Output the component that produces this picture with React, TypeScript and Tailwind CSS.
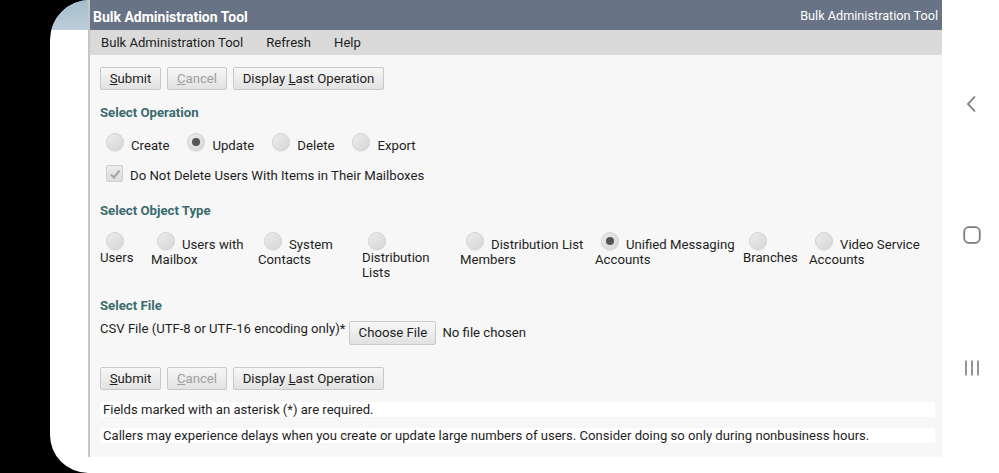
import React from 'react';

const font = { fontFamily: 'Roboto, "Noto Sans", sans-serif' };

function Btn({ children, disabled, className = '' }: { children: React.ReactNode; disabled?: boolean; className?: string }) {
  return (
    <span
      className={`inline-flex shrink-0 items-center justify-center whitespace-nowrap rounded-[2px] border border-[#c9c9c9] bg-gradient-to-b from-[#f7f7f7] to-[#e2e2e2] text-[13.2px] leading-[16px] ${disabled ? 'text-[#a0a0a0]' : 'text-[#1e1e1e]'} ${className}`}
    >
      {children}
    </span>
  );
}

function Radio({ on }: { on?: boolean }) {
  return (
    <span className="inline-grid h-[18px] w-[18px] shrink-0 place-items-center rounded-full border border-[#d3d3d3] bg-gradient-to-br from-[#ececec] to-[#d6d6d6] shadow-[0_1px_1px_rgba(0,0,0,0.08)]">
      {on && <span className="h-[8px] w-[8px] rounded-full bg-[#555]" />}
    </span>
  );
}

const objects = [
  { w: 51, first: '', rest: ['Users'], on: false },
  { w: 107, first: 'Users with', rest: ['Mailbox'], on: false },
  { w: 104, first: 'System', rest: ['Contacts'], on: false },
  { w: 98, first: '', rest: ['Distribution', 'Lists'], on: false },
  { w: 135, first: 'Distribution List', rest: ['Members'], on: false },
  { w: 148, first: 'Unified Messaging', rest: ['Accounts'], on: true },
  { w: 66, first: '', rest: ['Branches'], on: false },
  { w: 125, first: 'Video Service', rest: ['Accounts'], on: false },
];

function ButtonRow() {
  return (
    <div className="flex h-[23px] gap-[6px]">
      <Btn className="w-[61px]"><span><span className="underline">S</span>ubmit</span></Btn>
      <Btn disabled className="w-[60px]"><span><span className="underline">C</span>ancel</span></Btn>
      <Btn className="w-[151px]"><span>Display <span className="underline">L</span>ast Operation</span></Btn>
    </div>
  );
}

export default function App() {
  return (
    <div className="flex h-[473px] w-[999px] overflow-hidden bg-black text-[#1e1e1e]" style={font}>
      <div className="w-[50px] shrink-0" />
      <div className="flex flex-1 overflow-hidden rounded-tl-[40px] rounded-bl-[38px] bg-white">
        {/* left strip */}
        <div className="flex w-[38px] shrink-0 flex-col">
          <div className="h-[30px] bg-gradient-to-b from-[#a4bccb] to-[#bccfd9]" />
        </div>

        {/* main column */}
        <div className="flex h-[457px] w-[854px] shrink-0 flex-col border-l-2 border-[#c6c6c6] bg-[#f7f7f7]">
          <div className="flex h-[30px] shrink-0 items-center justify-between bg-[#687385] pl-[3px] pr-[4px] text-white">
            <span className="mt-[3px] text-[14px] font-bold leading-[16px]">Bulk Administration Tool</span>
            <span className="mt-[1px] text-[12.7px] leading-[16px]">Bulk Administration Tool</span>
          </div>
          <div className="flex h-[25px] shrink-0 items-center gap-[23px] bg-[#dadada] pl-[11px] pt-[1px] text-[13.1px] leading-[16px]">
            <span>Bulk Administration Tool</span>
            <span>Refresh</span>
            <span>Help</span>
          </div>

          <div className="flex flex-1 flex-col px-[10px] pt-[12px] text-[13.2px] leading-[16px]">
            <ButtonRow />

            <div className="mt-[15px] font-bold text-[#3b6b6e]">Select Operation</div>
            <div className="mt-[12px] flex pl-[6px]">
              {[['Create', false], ['Update', true], ['Delete', false], ['Export', false]].map(([l, on]) => (
                <div key={l as string} className="mr-[18px] flex items-start gap-[7px]">
                  <Radio on={on as boolean} />
                  <span className="mt-[5px]">{l}</span>
                </div>
              ))}
            </div>
            <div className="mt-[11px] flex items-start gap-[7px] pl-[6px]">
              <span className="grid h-[17px] w-[17px] place-items-center rounded-[2px] border border-[#cfcfcf] bg-gradient-to-b from-[#ececec] to-[#dedede]">
                <svg width="12" height="12" viewBox="0 0 12 12">
                  <path d="M2 6.5 L5 9.5 L10.5 2.5" fill="none" stroke="#a8a8a8" strokeWidth="2.2" />
                </svg>
              </span>
              <span className="mt-[3px]">Do Not Delete Users With Items in Their Mailboxes</span>
            </div>

            <div className="mt-[19px] font-bold text-[#3b6b6e]">Select Object Type</div>
            <div className="mt-[13px] flex">
              {objects.map((o, i) => (
                <div key={i} className="flex shrink-0 flex-col leading-[15px]" style={{ width: o.w }}>
                  <div className="flex items-start">
                    <span className="ml-[6px] flex"><Radio on={o.on} /></span>
                    {o.first && <span className="ml-[7px] mt-[5px] whitespace-nowrap">{o.first}</span>}
                  </div>
                  {o.rest.map((r) => (
                    <span key={r} className="whitespace-nowrap">{r}</span>
                  ))}
                </div>
              ))}
            </div>

            <div className="mt-[18px] font-bold text-[#3b6b6e]">Select File</div>
            <div className="mt-[7px] flex items-start">
              <span className="whitespace-nowrap text-[13.1px]">CSV File (UTF-8 or UTF-16 encoding only)*</span>
              <Btn className="ml-[4px] h-[24px] w-[87px]">Choose File</Btn>
              <span className="ml-[6px] mt-[4px]">No file chosen</span>
            </div>

            <div className="mt-[22px]">
              <ButtonRow />
            </div>

            <div className="mr-[-3px] mt-[12px] flex h-[15px] items-center bg-white pl-[3px] text-[13.1px]">
              Fields marked with an asterisk (*) are required.
            </div>
            <div className="mr-[-3px] mt-[11px] flex h-[15px] items-center whitespace-nowrap bg-white pl-[3px] text-[13.1px]">
              Callers may experience delays when you create or update large numbers of users. Consider doing so only during nonbusiness hours.
            </div>
          </div>
        </div>

        {/* nav bar */}
        <div className="relative flex-1 bg-white">
          <svg className="absolute left-[23px] top-[95px]" width="14" height="18" viewBox="0 0 14 18">
            <path d="M10 1.5 L3 9 L10 16.5" fill="none" stroke="#7a7a7a" strokeWidth="1.8" />
          </svg>
          <svg className="absolute left-[21px] top-[226px]" width="18" height="18" viewBox="0 0 18 18">
            <rect x="1.2" y="1.2" width="15.6" height="15.6" rx="4.5" fill="none" stroke="#7a7a7a" strokeWidth="1.8" />
          </svg>
          <svg className="absolute left-[22px] top-[360px]" width="16" height="16" viewBox="0 0 16 16">
            <path d="M2 0.5 V15.5 M8 0.5 V15.5 M14 0.5 V15.5" fill="none" stroke="#7a7a7a" strokeWidth="1.6" />
          </svg>
        </div>
      </div>
    </div>
  );
}
